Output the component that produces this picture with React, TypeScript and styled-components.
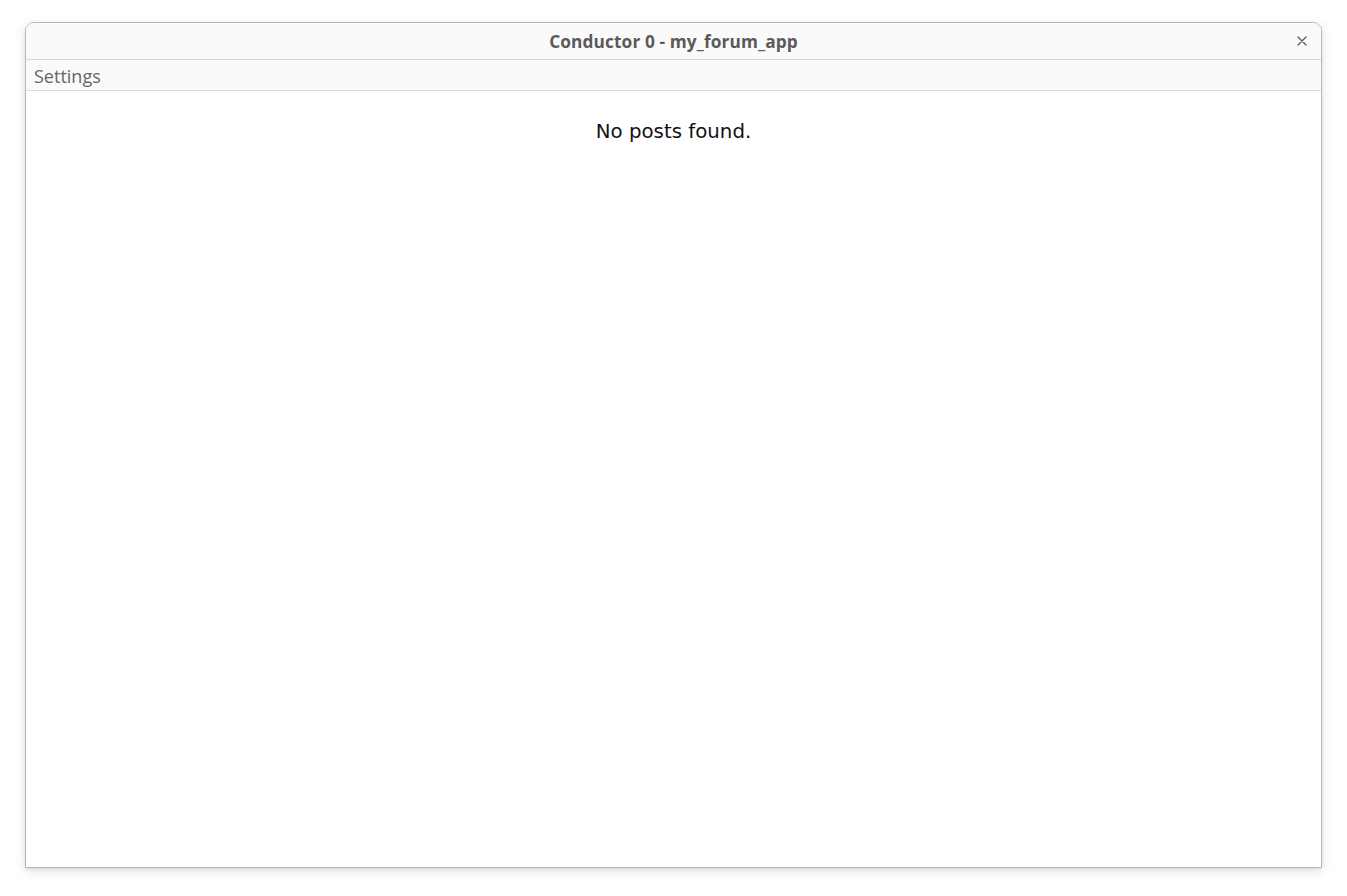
import React from 'react'
import styled, { createGlobalStyle } from 'styled-components'

const GlobalStyle = createGlobalStyle`
  html, body {
    margin: 0;
    padding: 0;
    background: #ffffff;
  }
`

const Desktop = styled.div`
  width: 1347px;
  height: 896px;
  padding: 22px 0 0 25px;
  box-sizing: border-box;
  background: #ffffff;
`

const Window = styled.div`
  width: 1297px;
  height: 846px;
  box-sizing: border-box;
  display: flex;
  flex-direction: column;
  border: 1px solid #b8b8b8;
  border-radius: 9px 9px 0 0;
  background: #ffffff;
  box-shadow: 0 3px 12px rgba(0, 0, 0, 0.12), 0 1px 3px rgba(0, 0, 0, 0.08);
  overflow: hidden;
`

const TitleBar = styled.div`
  height: 36px;
  flex: 0 0 auto;
  display: flex;
  align-items: center;
  justify-content: center;
  position: relative;
  background: #fafafa;
  border-bottom: 1px solid #d6d6d6;
`

const Title = styled.span`
  font-family: 'Open Sans', 'Noto Sans', sans-serif;
  font-weight: 700;
  font-size: 17.3px;
  color: #5a5a5a;
  letter-spacing: 0.1px;
`

const CloseButton = styled.button`
  position: absolute;
  right: 11px;
  top: 10px;
  width: 16px;
  height: 16px;
  padding: 0;
  border: 0;
  background: transparent;
  display: flex;
  align-items: center;
  justify-content: center;
  cursor: pointer;
`

const MenuBar = styled.div`
  height: 31px;
  flex: 0 0 auto;
  box-sizing: border-box;
  display: flex;
  align-items: center;
  padding: 2px 0 0 8px;
  background: #fafafa;
  border-bottom: 1px solid #dcdcdc;
`

const MenuItem = styled.span`
  font-family: 'Open Sans', 'Noto Sans', sans-serif;
  font-size: 18px;
  color: #666666;
`

const Content = styled.div`
  flex: 1;
  display: flex;
  justify-content: center;
  padding-top: 28px;
  background: #ffffff;
`

const EmptyMessage = styled.p`
  margin: 0;
  font-family: 'DejaVu Sans', sans-serif;
  font-size: 19.8px;
  line-height: 26px;
  color: #111111;
`

export default function App () {
  return (
    <>
      <GlobalStyle />
      <Desktop>
        <Window>
          <TitleBar>
            <Title>Conductor 0 - my_forum_app</Title>
            <CloseButton aria-label='Close'>
              <svg width='10' height='10' viewBox='0 0 10 10'>
                <path d='M1 1 L9 9 M9 1 L1 9' stroke='#555555' strokeWidth='1.2' strokeLinecap='round' />
              </svg>
            </CloseButton>
          </TitleBar>
          <MenuBar>
            <MenuItem>Settings</MenuItem>
          </MenuBar>
          <Content>
            <EmptyMessage>No posts found.</EmptyMessage>
          </Content>
        </Window>
      </Desktop>
    </>
  )
}
